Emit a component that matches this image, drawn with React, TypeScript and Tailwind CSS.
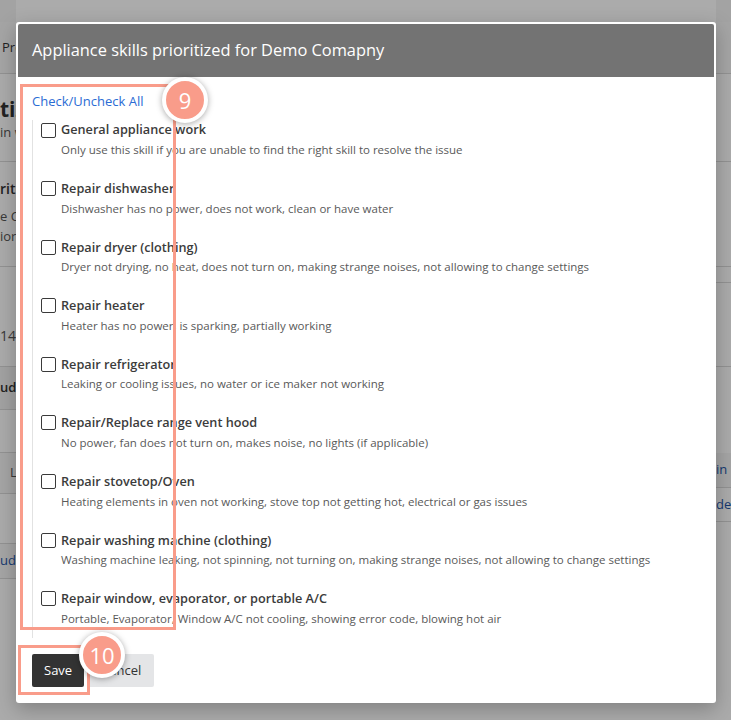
import React from 'react'

type Skill = {
  name: string
  description: string
}

const skills: Skill[] = [
  { name: 'General appliance work', description: 'Only use this skill if you are unable to find the right skill to resolve the issue' },
  { name: 'Repair dishwasher', description: 'Dishwasher has no power, does not work, clean or have water' },
  { name: 'Repair dryer (clothing)', description: 'Dryer not drying, no heat, does not turn on, making strange noises, not allowing to change settings' },
  { name: 'Repair heater', description: 'Heater has no power, is sparking, partially working' },
  { name: 'Repair refrigerator', description: 'Leaking or cooling issues, no water or ice maker not working' },
  { name: 'Repair/Replace range vent hood', description: 'No power, fan does not turn on, makes noise, no lights (if applicable)' },
  { name: 'Repair stovetop/Oven', description: 'Heating elements in oven not working, stove top not getting hot, electrical or gas issues' },
  { name: 'Repair washing machine (clothing)', description: 'Washing machine leaking, not spinning, not turning on, making strange noises, not allowing to change settings' },
  { name: 'Repair window, evaporator, or portable A/C', description: 'Portable, Evaporator, Window A/C not cooling, showing error code, blowing hot air' },
]

function StepBadge({ label }: { label: string }) {
  return (
    <div className="w-[46px] h-[46px] rounded-full bg-[#f99c8a] border-[4px] border-white shadow-[0_1px_6px_rgba(0,0,0,0.35)] flex items-center justify-center text-white text-[22px] leading-none">
      {label}
    </div>
  )
}

function SkillRow({ skill, last }: { skill: Skill; last: boolean }) {
  return (
    <div className={last ? '' : 'mb-[19.6px]'}>
      <label className="flex items-center h-[20px]">
        <span className="w-[15px] h-[15px] border-[1.5px] border-[#3a3a3a] rounded-[2px] bg-white" />
        <span className="ml-[5px] text-[12.7px] font-semibold text-[#3b3b3b] whitespace-nowrap">{skill.name}</span>
      </label>
      <p className="mt-[1px] pl-[20px] h-[18px] leading-[18px] text-[11.5px] text-[#595959] whitespace-nowrap">{skill.description}</p>
    </div>
  )
}

// page behind the dialog, only its edges show
function BackgroundPage() {
  return (
    <div className="absolute inset-0 bg-white text-[#333] flex justify-between">
      <div className="w-[16px] overflow-hidden whitespace-nowrap">
        <div className="h-[22px] bg-[#f4f4f4]" />
        <div className="h-[52px] bg-[#f7f7f7] border-b border-[#dadada] flex items-center pl-[2px] text-[13px]">Pre</div>
        <div className="pt-[22px] h-[88px] border-b border-[#dadada]">
          <div className="text-[21px] font-bold leading-[26px]">tiz</div>
          <div className="text-[13px] text-[#555] leading-[20px]">in w</div>
        </div>
        <div className="h-[105px] pt-[16px] border-b border-[#dadada] text-[13px]">
          <div className="font-semibold text-[14px] leading-[22px]">rit</div>
          <div className="leading-[20px] mt-[6px] text-[#555]">e C</div>
          <div className="leading-[20px] text-[#555]">iori</div>
        </div>
        <div className="h-[100px] pt-[58px] border-b border-[#dadada] text-[14px] text-[#555]">14</div>
        <div className="h-[43px] flex items-center border-b border-[#dadada] text-[13px] font-semibold bg-[#f2f2f2]">ude</div>
        <div className="h-[43px] border-b border-[#dadada]" />
        <div className="h-[41px] flex items-center pl-[10px] border-b border-[#dadada] text-[13px] text-[#555] bg-[#f7f7f7]">L</div>
        <div className="h-[50px] border-b border-[#dadada]" />
        <div className="h-[35px] flex items-center border-b border-[#dadada] text-[13px] text-[#1f56a8] bg-[#f7f7f7]">ude</div>
      </div>
      <div className="w-[15px] overflow-hidden whitespace-nowrap">
        <div className="h-[22px] bg-[#f4f4f4]" />
        <div className="h-[52px] bg-[#f7f7f7] border-b border-[#dadada]" />
        <div className="h-[88px] border-b border-[#dadada]" />
        <div className="h-[105px] border-b border-[#dadada]" />
        <div className="h-[16px] border-b border-[#dadada]" />
        <div className="h-[84px] border-b border-[#dadada]" />
        <div className="h-[86px]" />
        <div className="h-[35px] flex items-center border-b border-[#dadada] text-[13px] text-[#1f56a8] bg-[#f7f7f7]">in</div>
        <div className="h-[34px] flex items-center border-b border-[#dadada] text-[13px] text-[#1f56a8]">de</div>
      </div>
    </div>
  )
}

export default function App() {
  return (
    <div className="relative w-full h-[720px] overflow-hidden font-['Open_Sans',sans-serif]">
      <BackgroundPage />
      <div className="absolute inset-0 bg-black/[0.33]" />

      <div className="absolute left-[16px] top-[22px] w-[700px] bg-white rounded-[3px] p-[2px] shadow-[0_6px_20px_rgba(0,0,0,0.25)]">
        <div className="h-[53px] bg-[#737373] rounded-t-[2px] flex items-center pl-[14px] text-white text-[16.4px]">
          Appliance skills prioritized for Demo Comapny
        </div>

        <div className="relative pl-[14px] pt-[14px] pb-[14px]">
          <a className="block w-fit h-[20px] leading-[20px] text-[13px] text-[#2b6cd4] mb-[9px]" href="#">Check/Uncheck All</a>

          <div className="border-l border-[#e2e2e2] pl-[8px] pb-[10px]">
            {skills.map((skill, i) => (
              <SkillRow key={skill.name} skill={skill} last={i === skills.length - 1} />
            ))}
          </div>

          <div className="flex items-center gap-[4px] mt-[16px]">
            <button className="h-[33px] px-[12px] bg-[#333333] text-white text-[13px] rounded-[2px]">Save</button>
            <button className="h-[33px] px-[13px] bg-[#e4e5e7] text-[#333] text-[13px] rounded-[2px]">Cancel</button>
          </div>

          {/* annotation overlays */}
          <div className="absolute left-[2px] top-[7px] w-[156px] h-[546px] border-[3px] border-[#f99c8a] pointer-events-none" />
          <div className="absolute left-[144px] top-[0px]">
            <StepBadge label="9" />
          </div>
          <div className="absolute left-[0px] top-[568px] w-[72px] h-[50px] border-[3px] border-[#f99c8a] pointer-events-none" />
          <div className="absolute left-[61px] top-[555px]">
            <StepBadge label="10" />
          </div>
        </div>
      </div>
    </div>
  )
}
